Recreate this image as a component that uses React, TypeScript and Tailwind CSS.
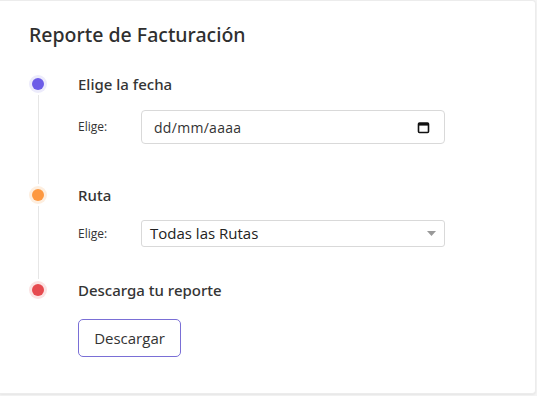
import React from 'react';

type Step = {
  title: string;
  dot: string;
  halo: string;
  last?: boolean;
  children: React.ReactNode;
};

function TimelineStep({ title, dot, halo, last, children }: Step) {
  return (
    <div className="flex">
      <div className="flex w-[18px] flex-col items-center">
        <div className="flex h-[22px] items-center">
          <span className={`flex h-[18px] w-[18px] items-center justify-center rounded-full ${halo}`}>
            <span className={`h-[12px] w-[12px] rounded-full ${dot}`} />
          </span>
        </div>
        {!last && <div className="w-px flex-1 bg-[#e6e6e6]" />}
      </div>
      <div className="ml-[31px] flex-1">
        <h3 className="h-[22px] font-['Noto_Sans'] text-[15px] font-medium leading-[22px] text-[#343434]">{title}</h3>
        {children}
      </div>
    </div>
  );
}

function CalendarIcon() {
  return (
    <svg width="13" height="13" viewBox="0 0 13 13" fill="none">
      <rect x="1.5" y="2" width="10" height="9.5" rx="1" stroke="#111" strokeWidth="1.6" />
      <rect x="1.5" y="2" width="10" height="2.6" fill="#111" />
    </svg>
  );
}

export default function App() {
  return (
    <div className="min-h-screen bg-[#f4f4f4]" style={{ fontFamily: '"Open Sans", "Noto Sans", sans-serif' }}>
      <div className="h-[394px] w-[536px] rounded-r-[4px] border border-l-0 border-[#ececec] bg-white px-[29px] pt-[20px] shadow-[0_1px_2px_rgba(0,0,0,0.06)]">
        <h2 className="font-['Noto_Sans'] text-[19.5px] font-medium leading-[28px] text-[#2f2f2f]">Reporte de Facturación</h2>

        <div className="mt-[24px]">
          <TimelineStep title="Elige la fecha" dot="bg-[#6c5ce7]" halo="bg-[#ecebfb]">
            <div className="mt-[15px] flex items-center pb-[40px]">
              <span className="w-[63px] text-[12px] text-[#333]">Elige:</span>
              <div className="flex h-[34px] w-[304px] items-center justify-between rounded-[4px] border border-[#d9d9d9] pl-[12px] pr-[14px]">
                <span className="text-[14px] tracking-[0.3px] text-[#333]">dd/mm/aaaa</span>
                <CalendarIcon />
              </div>
            </div>
          </TimelineStep>

          <TimelineStep title="Ruta" dot="bg-[#fd9840]" halo="bg-[#fdeedf]">
            <div className="mt-[14px] flex items-center pb-[32px]">
              <span className="w-[63px] text-[12px] text-[#333]">Elige:</span>
              <div className="flex h-[27px] w-[304px] items-center justify-between rounded-[3px] border border-[#d9d9d9] pl-[8px] pr-[8px]">
                <span className="text-[15px] text-[#222]">Todas las Rutas</span>
                <svg width="9" height="5" viewBox="0 0 9 5">
                  <path d="M0 0h9L4.5 5z" fill="#999" />
                </svg>
              </div>
            </div>
          </TimelineStep>

          <TimelineStep title="Descarga tu reporte" dot="bg-[#e64a4f]" halo="bg-[#fbe3e3]" last>
            <button className="mt-[18px] flex h-[38px] w-[103px] items-center justify-center rounded-[5px] border border-[#7a6fd6] bg-white text-[15px] text-[#333]">
              Descargar
            </button>
          </TimelineStep>
        </div>
      </div>
    </div>
  );
}
